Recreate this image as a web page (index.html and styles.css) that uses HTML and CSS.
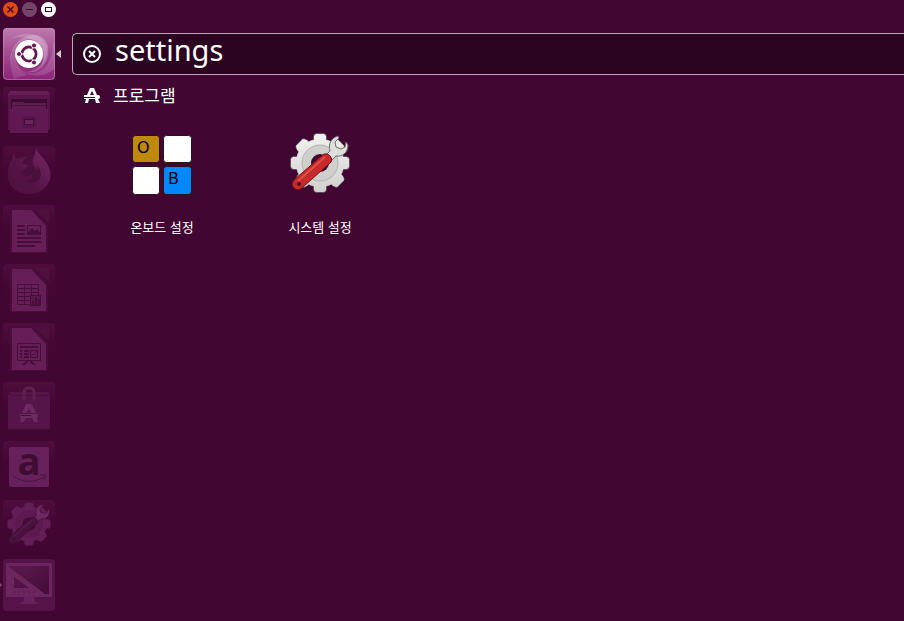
FILE: index.html
```html
<!doctype html>

<html lang="ko">
<head>
  <meta charset="utf-8">
  <title>settings</title>
  <link rel="stylesheet" href="styles.css">
</head>

<body>

<!-- shared drawings -->
<svg class="defs" aria-hidden="true">
  <defs>
    <linearGradient id="gearFill" x1="0" y1="0" x2="0" y2="60" gradientUnits="userSpaceOnUse">
      <stop offset="0" stop-color="#f2f2f0"/>
      <stop offset="1" stop-color="#d0d0ce"/>
    </linearGradient>
    <linearGradient id="dashFill" x1="0" y1="0" x2="0" y2="1">
      <stop offset="0" stop-color="#bd7aac"/>
      <stop offset="0.5" stop-color="#a14b90"/>
      <stop offset="1" stop-color="#8c2379"/>
    </linearGradient>
    <linearGradient id="foxFill" x1="1" y1="0" x2="0" y2="1">
      <stop offset="0" stop-color="#762b65"/>
      <stop offset="0.6" stop-color="#541345"/>
      <stop offset="1" stop-color="#4e103f"/>
    </linearGradient>
    <linearGradient id="screenFill" x1="0" y1="0" x2="1" y2="1">
      <stop offset="0" stop-color="#5c1a4f"/>
      <stop offset="1" stop-color="#430c37"/>
    </linearGradient>
    <symbol id="gear" viewBox="0 0 60 60">
      <g class="gear-edge">
        <circle cx="30" cy="30" r="24"/>
        <rect x="24" y="1" width="12" height="58" rx="2"/>
        <rect x="24" y="1" width="12" height="58" rx="2" transform="rotate(45 30 30)"/>
        <rect x="24" y="1" width="12" height="58" rx="2" transform="rotate(90 30 30)"/>
        <rect x="24" y="1" width="12" height="58" rx="2" transform="rotate(135 30 30)"/>
      </g>
      <g class="gear-body">
        <circle cx="30" cy="30" r="24"/>
        <path d="M26 1H34L36 3V57L34 59H26L24 57V3Z"/>
        <path d="M1 26V34L3 36H57L59 34V26L57 24H3Z"/>
        <path d="M6 13L13 6L17 7L53 43L54 47L47 54L43 53L7 17Z"/>
        <path d="M47 6L54 13L53 17L17 53L13 54L6 47L7 43L43 7Z"/>
      </g>
      <circle class="gear-ring" cx="30" cy="30" r="18"/>
      <circle class="gear-hole" cx="30" cy="30" r="9"/>
      <path class="wrench-head" d="M36 22L40 18C38 11 41 5 48 3L49 5L45 9L46 14L51 16L55 14L56 9L58 12C58 20 52 24 46 23L41 28Z"/>
      <path class="wrench-grip" d="M34 21Q38 20 40 23Q43 26 41 29L13 54Q8 59 4 55Q0 51 5 46Z"/>
      <path class="wrench-shine" d="M35 24L8 48"/>
      <circle class="wrench-eye" cx="9" cy="51" r="2"/>
    </symbol>
  </defs>
</svg>

<div class="window-buttons">
  <button class="win-btn close" aria-label="닫기">
    <svg viewBox="0 0 15 15"><path d="M4.500 4.500L10.500 10.500M10.500 4.500L4.500 10.500" stroke-width="1.500"/></svg>
  </button>
  <button class="win-btn minimize" aria-label="최소화">
    <svg viewBox="0 0 15 15"><path d="M4 7.500H11"/></svg>
  </button>
  <button class="win-btn maximize" aria-label="복원">
    <svg viewBox="0 0 15 15"><rect x="4.500" y="5.500" width="6" height="4"/></svg>
  </button>
</div>

<div class="desktop">

  <nav class="launcher">
    <a class="tile active" href="#" aria-label="Dash">
      <svg viewBox="0 0 52 52">
        <rect width="52" height="52" rx="4" fill="url(#dashFill)"/>
        <path d="M8 38C4 22 16 7 31 7C41 7 47 15 45 26C44 38 34 46 24 44C38 42 42 33 41 25C38 12 29 10 22 12C12 15 7 25 8 38Z" fill="#fff" opacity="0.22"/>
        <path d="M0 17C12 4 31 2 40 12C47 19 44 32 38 38C43 27 39 17 32 13C20 6 7 9 0 17Z" fill="#fff" opacity="0.18"/>
        <path d="M13 36C18 45 29 48 37 43C46 38 50 28 50 15L52 14V40C42 51 19 50 13 36Z" fill="#fff" opacity="0.14"/>
        <path d="M11 51C6 40 7 24 14 17C10 30 14 42 24 47C18 49 14 49 11 51Z" fill="#fff" opacity="0.12"/>
        <rect x="0.500" y="0.500" width="51" height="51" rx="4" fill="none" stroke="#c68bb9" stroke-opacity="0.6"/>
        <circle cx="26" cy="27" r="14" fill="#75215f" opacity="0.4"/>
        <circle cx="26" cy="26" r="14" fill="#fff"/>
        <circle cx="26" cy="26" r="7" fill="none" stroke="#671455" stroke-width="3"/>
        <path d="M26 26L12 26M26 26L33 14M26 26L33 38" stroke="#fff" stroke-width="1"/>
        <g fill="#671455" stroke="#fff" stroke-width="1">
          <circle cx="16" cy="26" r="2.500"/>
          <circle cx="31" cy="17.500" r="2.500"/>
          <circle cx="31" cy="34.500" r="2.500"/>
        </g>
        <circle cx="26" cy="26" r="5.500" fill="#fff"/>
      </svg>
    </a>

    <a class="tile" href="#" aria-label="파일">
      <svg viewBox="0 0 52 52">
        <path d="M7 4H45L47 8V43H5V8Z" fill="#591449"/>
        <path d="M7 4H45L47 8H5Z" fill="#681f58"/>
        <rect x="8" y="12" width="36" height="10" fill="#3c0b30"/>
        <path d="M9 15H20L21 16H43V22H9Z" fill="#5f1c50"/>
        <path d="M9 18.500H43" stroke="#4d113f"/>
        <rect x="7" y="22" width="38" height="24" fill="#601a51"/>
        <rect x="19" y="29" width="14" height="12" rx="2" fill="#58154a"/>
        <rect x="21.500" y="32.500" width="9" height="5" fill="#6a245b" stroke="#430d36"/>
      </svg>
    </a>

    <a class="tile" href="#" aria-label="Firefox">
      <svg viewBox="0 0 52 52">
        <circle cx="25" cy="28" r="20" fill="#4a0f3c"/>
        <path d="M33 2C34 8 45 14 47 25C50 37 39 48 26 48C12 48 3 38 5 25C5 20 7 16 9 14L10 8L14 13C18 11 21 12 24 11C22 13 19 15 19 18L25 19C24 23 20 23 19 25C17 31 24 31 29 29C31 31 25 36 20 34C27 41 37 37 38 29C38 24 36 22 34 20L35 25C30 21 28 16 31 11Z" fill="url(#foxFill)"/>
      </svg>
    </a>

    <a class="tile" href="#" aria-label="LibreOffice Writer">
      <svg viewBox="0 0 52 52">
        <path class="doc-back" d="M32 4H46V18Z"/>
        <path class="doc-shade" d="M7 4H29L45 20V48H7Z"/>
        <path class="doc" d="M9 5H28L43 21V47H9Z"/>
        <path class="ink" d="M14 21H22M14 25H22M14 29H22M14 33H38M14 37H38M14 41H32"/>
        <rect class="ink thin" x="24.500" y="20.500" width="13" height="9"/>
        <path class="ink-fill" d="M25 30V27L29 23L32 26L34 24L37 28V30Z"/>
      </svg>
    </a>

    <a class="tile" href="#" aria-label="LibreOffice Calc">
      <svg viewBox="0 0 52 52">
        <path class="doc-back" d="M32 4H46V18Z"/>
        <path class="doc-shade" d="M7 4H29L45 20V48H7Z"/>
        <path class="doc" d="M9 5H28L43 21V47H9Z"/>
        <path class="ink thin" d="M14.500 20.500H35.500V40.500H14.500ZM14 24.500H36M14 28.500H36M14 32.500H36M14 36.500H36M21.500 20V41M28.500 20V41"/>
        <rect class="doc-patch" x="27.500" y="31.500" width="10" height="10"/>
        <path class="ink" d="M30 41V37M33 41V33M36 41V35"/>
      </svg>
    </a>

    <a class="tile" href="#" aria-label="LibreOffice Impress">
      <svg viewBox="0 0 52 52">
        <path class="doc-back" d="M32 4H46V18Z"/>
        <path class="doc-shade" d="M7 4H29L45 20V48H7Z"/>
        <path class="doc" d="M9 5H28L43 21V47H9Z"/>
        <rect class="ink thin" x="14.500" y="20.500" width="23" height="17"/>
        <path class="ink" d="M17 24H35M17 28H19M21 28H26M17 31H19M21 31H26M17 34H19M21 34H26M25 38L20 42M27 38L32 42"/>
        <rect class="ink thin" x="27.500" y="27.500" width="7" height="7"/>
        <path class="ink thin" d="M28 33L30 31L31 32L34 28"/>
      </svg>
    </a>

    <a class="tile" href="#" aria-label="소프트웨어">
      <svg viewBox="0 0 52 52">
        <path d="M5 13L8 10H46L47 13V47H5Z" fill="#561548"/>
        <path d="M5 13L8 10V14H45V10L47 13" fill="#4a103d"/>
        <path d="M21 18V10Q21 6 26 6Q31 6 31 10V18" fill="none" stroke="#60204f" stroke-width="3"/>
        <path d="M23 22H29L33 31H28L26 26L24 31H19ZM18 36H23L21 40H17ZM29 36H34L35 40H31Z" fill="#6c2a5e"/>
        <rect x="17" y="32" width="18" height="4" rx="2" fill="#6c2a5e"/>
        <path d="M18 33.500H28" stroke="#430f37"/>
      </svg>
    </a>

    <a class="tile" href="#" aria-label="Amazon">
      <svg viewBox="0 0 52 52">
        <rect x="6" y="6" width="40" height="40" rx="2" fill="#66205a"/>
        <text class="amazon-a" x="26" y="34" text-anchor="middle">a</text>
        <path d="M9 34C19 42 31 42 41 36M37 34H43L41 39" fill="none" stroke="#4b123e"/>
      </svg>
    </a>

    <a class="tile" href="#" aria-label="시스템 설정">
      <svg class="muted-gear" viewBox="0 0 52 52">
        <use href="#gear" x="4" y="2" width="44" height="44"/>
      </svg>
    </a>

    <a class="tile desk" href="#" aria-label="데스크톱">
      <svg viewBox="0 0 52 52">
        <rect x="3" y="4" width="46" height="34" rx="1" fill="#6d2560"/>
        <rect x="6" y="7" width="40" height="28" fill="url(#screenFill)"/>
        <path d="M6 8L42 35H6ZM11 18V29H26Z" fill="#6a265d" fill-rule="evenodd"/>
        <path d="M11 34V32M16 34V32M21 34V32M26 34V32M31 34V32" stroke="#531746"/>
        <path d="M21 38H31V42L34 44V45H17V44L21 42Z" fill="#68235c"/>
      </svg>
    </a>
  </nav>

  <main class="dash">
    <form class="search" role="search">
      <button class="clear" type="reset" aria-label="지우기">
        <svg viewBox="0 0 20 20"><circle cx="10" cy="10" r="8"/><path d="M7 7L13 13M13 7L7 13"/></svg>
      </button>
      <input type="text" name="query" value="settings" aria-label="검색" autocomplete="off" spellcheck="false">
    </form>

    <section>
      <h2 class="category">
        <svg class="category-icon" viewBox="0 0 18 18">
          <path d="M7 1H11L14 8H11L9 4L7 8H4ZM3 12H6L5 16H2ZM12 12H15L17 16H13Z"/>
          <path d="M1 8H15Q17 8 17 10Q17 12 15 12H1V11H12V10H1Z"/>
        </svg>
        프로그램
      </h2>
      <ul class="apps">
        <li>
          <a href="#">
            <svg class="app-icon" viewBox="0 0 60 60">
              <rect class="key" x="0.500" y="0.500" width="27" height="27" rx="3" fill="#bf890d"/>
              <rect class="key" x="31.500" y="0.500" width="28" height="27" rx="3" fill="#fff"/>
              <rect class="key" x="0.500" y="31.500" width="27" height="28" rx="3" fill="#fff"/>
              <rect class="key" x="31.500" y="31.500" width="28" height="28" rx="3" fill="#0088ff"/>
              <text class="key-label" x="5" y="18">O</text>
              <text class="key-label" x="36" y="49">B</text>
            </svg>
            <span>온보드 설정</span>
          </a>
        </li>
        <li>
          <a href="#">
            <svg class="app-icon" viewBox="0 2 60 60">
              <use href="#gear" width="60" height="60"/>
            </svg>
            <span>시스템 설정</span>
          </a>
        </li>
      </ul>
    </section>
  </main>

</div>

</body>
</html>
```

FILE: styles.css
```css
:root {
  --gear-edge: #8e8a8b;
  --gear-body: url(#gearFill);
  --gear-ring: #cfcfcd;
  --gear-line: #b4b4b2;
  --gear-hole: #420632;
  --wrench-head: #dededc;
  --wrench-line: #706a6b;
  --grip: #c62a2a;
  --grip-line: #781014;
  --shine: #df504b;
}

* {
  box-sizing: border-box;
}

body {
  margin: 0;
  min-height: 100vh;
  background: #420632;
  color: #fff;
  font-family: "Noto Sans", "Noto Sans CJK KR", sans-serif;
}

a {
  color: inherit;
  text-decoration: none;
}

button {
  padding: 0;
  border: 0;
  background: none;
}

svg {
  display: block;
  overflow: visible;
}

.defs {
  position: absolute;
  width: 0;
  height: 0;
}

/* window buttons */
.window-buttons {
  display: flex;
  gap: 4px;
  padding: 2px 3px 11px;
}

.win-btn {
  width: 15px;
  height: 15px;
  border-radius: 50%;
}

.win-btn svg {
  fill: none;
  stroke: #420632;
}

.close {
  background: #df4a16;
}

.minimize {
  background: #75446a;
}

.maximize {
  background: #fff;
}

.desktop {
  display: flex;
  align-items: flex-start;
}

/* launcher */
.launcher {
  display: flex;
  flex-direction: column;
  gap: 7px;
  padding-left: 3px;
}

.tile {
  position: relative;
  width: 52px;
  height: 52px;
  border-radius: 4px;
  background: linear-gradient(#4e0d3e, #440734 40%, #420632);
}

.active::after {
  content: "";
  position: absolute;
  left: 53px;
  top: 22px;
  border: 4px solid transparent;
  border-left: 0;
  border-right: 5px solid #d9cdd6;
}

.desk {
  background: #561347;
}

.desk::before {
  content: "";
  position: absolute;
  left: -3px;
  top: 24px;
  border: 2px solid transparent;
  border-left-color: #7e4e73;
  border-right: 0;
}

.doc {
  fill: #661e57;
}

.doc-back {
  fill: #4e103f;
}

.doc-shade {
  fill: #4a0c3b;
}

.doc-patch {
  fill: #5c184d;
  stroke: #440d37;
}

.ink {
  fill: none;
  stroke: #460e3a;
  stroke-width: 2;
}

.thin {
  stroke-width: 1;
}

.ink-fill {
  fill: #460e3a;
}

.amazon-a {
  fill: #3f0d34;
  font: bold 38px "Open Sans", sans-serif;
}

/* gear with wrench */
.gear-edge {
  fill: none;
  stroke: var(--gear-edge);
  stroke-width: 1;
}

.gear-body {
  fill: var(--gear-body);
}

.gear-ring {
  fill: var(--gear-ring);
  stroke: var(--gear-line);
}

.gear-hole {
  fill: var(--gear-hole);
}

.wrench-head {
  fill: var(--wrench-head);
  stroke: var(--wrench-line);
}

.wrench-grip {
  fill: var(--grip);
  stroke: var(--grip-line);
}

.wrench-shine {
  fill: none;
  stroke: var(--shine);
  stroke-width: 2;
}

.wrench-eye {
  fill: var(--gear-hole);
}

.muted-gear {
  --gear-edge: #55184a;
  --gear-body: #621e55;
  --gear-ring: #5c1a4f;
  --gear-line: #54174a;
  --gear-hole: #420a35;
  --wrench-head: #6c2a5f;
  --wrench-line: #4b113f;
  --grip: #49113d;
  --grip-line: #3c0c31;
  --shine: #541a48;
}

/* dash */
.dash {
  flex: 1;
  min-width: 0;
  padding: 5px 0 0 17px;
}

.search {
  display: flex;
  align-items: center;
  height: 42px;
  padding-left: 9px;
  border: 1px solid #bdaab8;
  border-right: 0;
  border-radius: 5px 0 0 5px;
  background: #2b0421;
}

.clear {
  width: 20px;
  height: 20px;
}

.clear svg {
  fill: none;
  stroke: #fff;
  stroke-width: 2;
}

.search input {
  flex: 1;
  min-width: 0;
  height: 40px;
  padding: 0 0 10px 13px;
  border: 0;
  outline: 0;
  background: none;
  color: #fff;
  font: 29px/30px "Noto Sans", sans-serif;
}

.category {
  display: flex;
  align-items: center;
  gap: 12px;
  margin: 8px 0 0;
  padding-left: 11px;
  font-size: 17px;
  font-weight: normal;
  line-height: 26px;
}

.category-icon {
  width: 18px;
  height: 18px;
  fill: #fff;
}

.apps {
  display: flex;
  flex-wrap: wrap;
  margin: 0;
  padding: 26px 0 0 11px;
  list-style: none;
}

.apps a {
  display: flex;
  flex-direction: column;
  align-items: center;
  gap: 22px;
  width: 158px;
  font-size: 13px;
  line-height: 20px;
}

.app-icon {
  width: 60px;
  height: 60px;
}

.key {
  stroke: #2b1021;
}

.key-label {
  fill: #000;
  font: 16px "DejaVu Sans", sans-serif;
}
```
